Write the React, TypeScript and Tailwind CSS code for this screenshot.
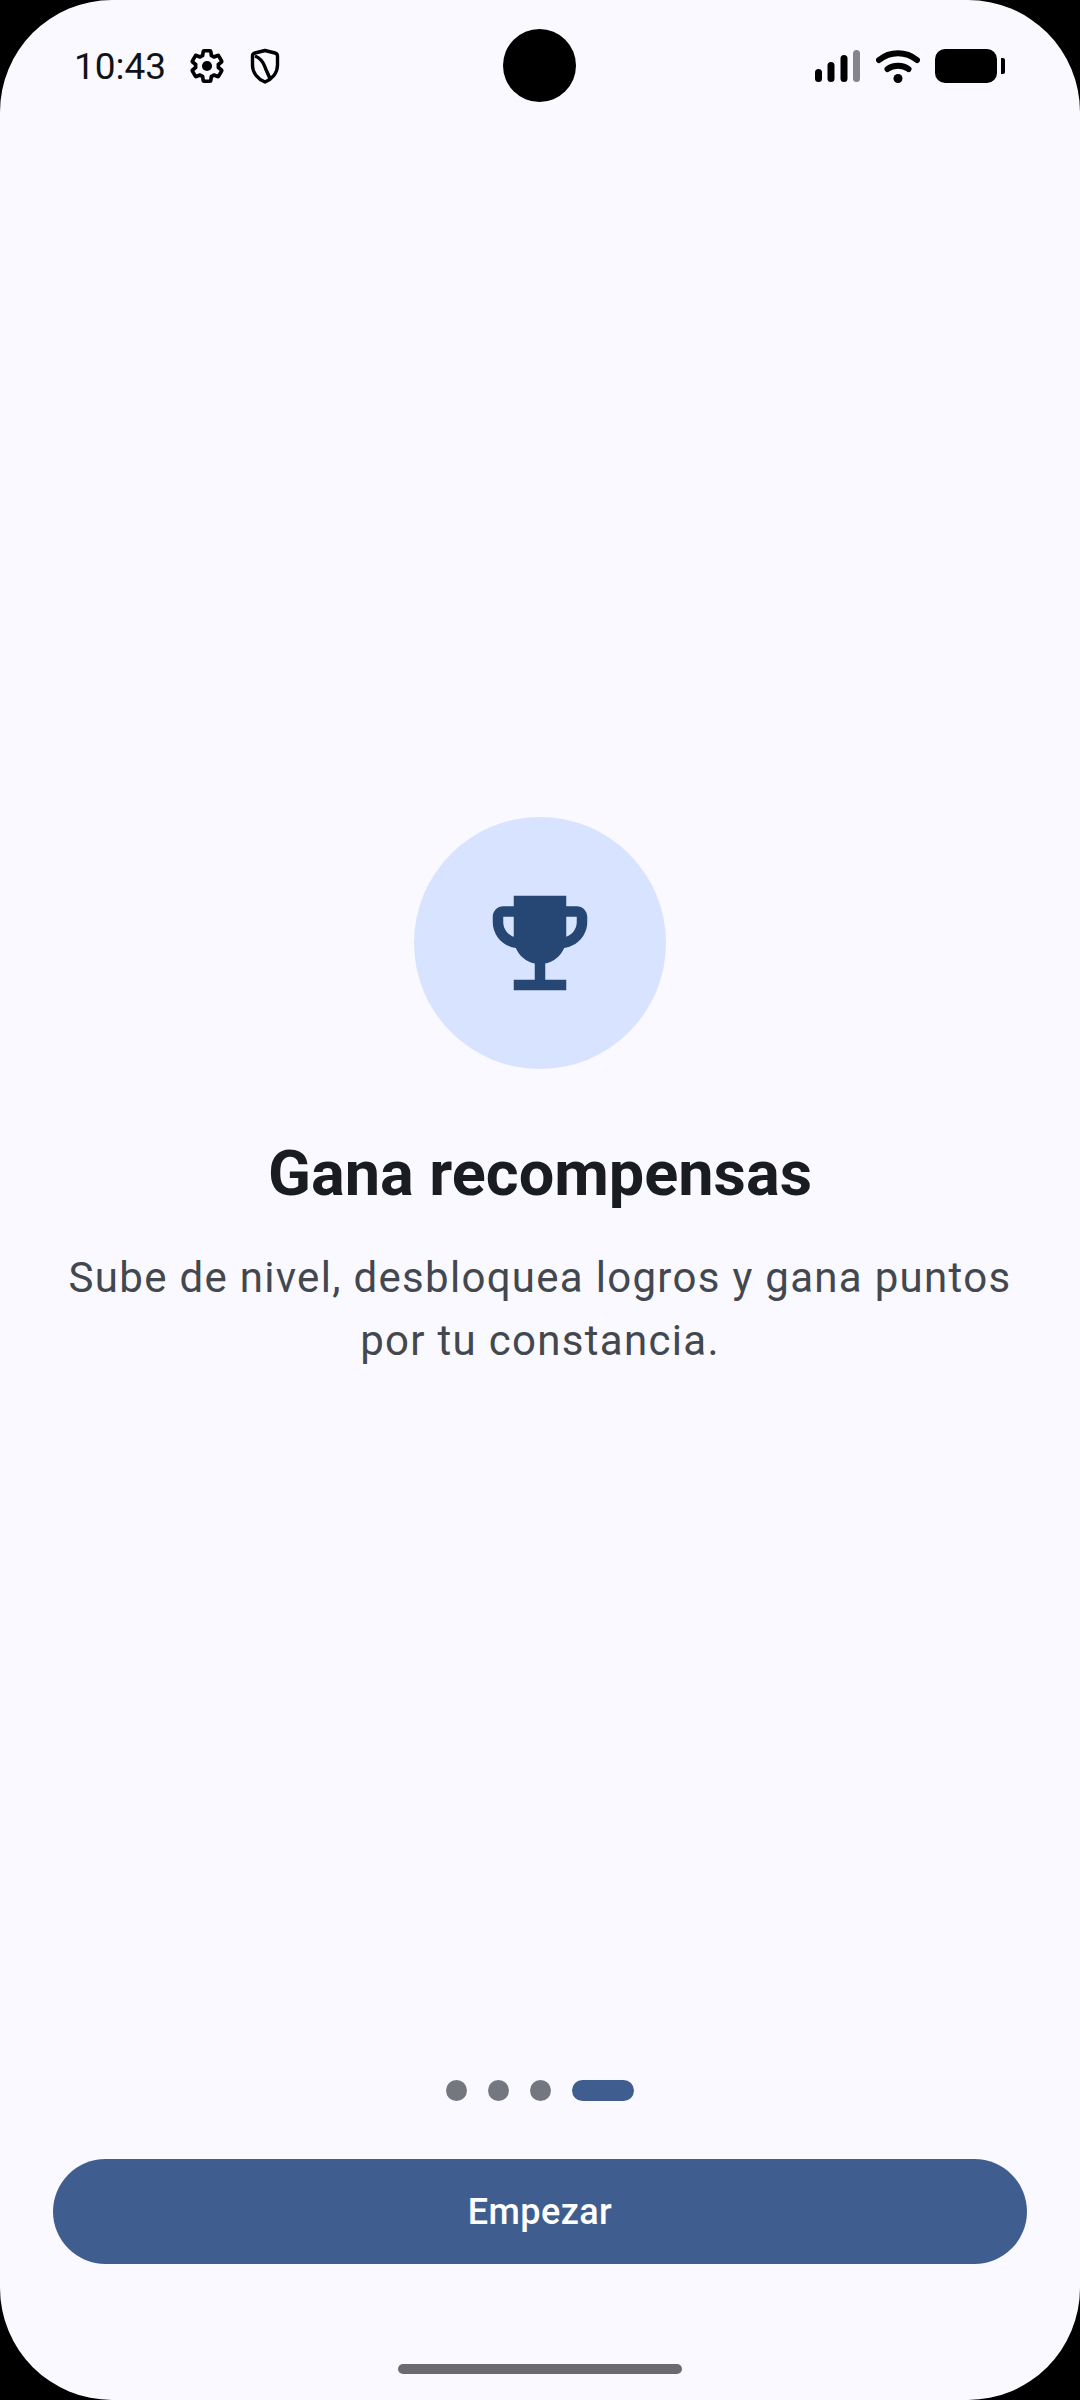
const dots = [0, 1, 2];

function GearIcon() {
  return (
    <svg viewBox="0 0 24 24" className="h-[38px] w-[38px]">
      <path
        fill="none"
        stroke="#000"
        strokeWidth="2.3"
        strokeLinejoin="round"
        d="M19.14 12.94c.04-.3.06-.61.06-.94 0-.32-.02-.64-.07-.94l2.03-1.58c.18-.14.23-.41.12-.61l-1.92-3.32c-.12-.22-.37-.29-.59-.22l-2.39.96c-.5-.38-1.03-.7-1.62-.94l-.36-2.54c-.04-.24-.24-.41-.48-.41h-3.84c-.24 0-.43.17-.47.41l-.36 2.54c-.59.24-1.13.57-1.62.94l-2.39-.96c-.22-.08-.47 0-.59.22L2.74 8.87c-.12.21-.08.47.12.61l2.03 1.58c-.05.3-.09.63-.09.94s.02.64.07.94l-2.03 1.58c-.18.14-.23.41-.12.61l1.92 3.32c.12.22.37.29.59.22l2.39-.96c.5.38 1.03.7 1.62.94l.36 2.54c.05.24.24.41.48.41h3.84c.24 0 .44-.17.47-.41l.36-2.54c.59-.24 1.13-.56 1.62-.94l2.39.96c.22.08.47 0 .59-.22l1.92-3.32c.12-.22.07-.47-.12-.61l-2.01-1.58z"
      />
      <circle cx="12" cy="12" r="3.2" fill="#000" />
    </svg>
  );
}

function ShieldIcon() {
  return (
    <svg viewBox="0 0 30 36" className="h-[36px] w-[30px]" fill="none" stroke="#000" strokeWidth="3.4">
      <path d="M15 2.5 L25 5 Q27.5 5.7 27.5 8 V17 C27.5 25 22 31 15 34 C8 31 2.5 25 2.5 17 V8 Q2.5 5.7 5 5 Z" strokeLinejoin="round" />
      <path d="M5 8 C10 10 13 13 15 19 C16.5 24 19 27 20 31" />
    </svg>
  );
}

function SignalIcon() {
  return (
    <svg viewBox="0 0 45 32" className="h-[32px] w-[45px]">
      <rect x="0" y="19" width="7" height="13" rx="3.5" fill="#000" />
      <rect x="12.5" y="12" width="7" height="20" rx="3.5" fill="#000" />
      <rect x="25.5" y="5" width="7" height="27" rx="3.5" fill="#000" />
      <rect x="38" y="0" width="7" height="32" rx="3.5" fill="#84858c" />
    </svg>
  );
}

function WifiIcon() {
  return (
    <svg viewBox="0 0 44 33" className="h-[33px] w-[44px]" fill="none" stroke="#000" strokeWidth="6" strokeLinecap="round">
      <path d="M3 10 C14 1 30 1 41 10" />
      <path d="M11.5 19 C17 14.5 27 14.5 32.5 19" />
      <circle cx="22" cy="28.5" r="4.5" fill="#000" stroke="none" />
    </svg>
  );
}

function BatteryIcon() {
  return (
    <div className="flex items-center gap-[4px]">
      <div className="h-[34px] w-[62px] rounded-[10px] bg-black" />
      <div className="h-[16px] w-[4px] rounded-r-[2px] bg-black" />
    </div>
  );
}

function TrophyIcon() {
  return (
    <svg viewBox="0 0 24 24" className="h-[126px] w-[126px]" fill="#264673">
      <path d="M19 5h-2V3H7v2H5c-1.1 0-2 .9-2 2v1c0 2.55 1.92 4.63 4.39 4.94.63 1.5 1.98 2.63 3.61 2.96V19H7v2h10v-2h-4v-3.1c1.63-.33 2.98-1.46 3.61-2.96C19.08 12.63 21 10.55 21 8V7c0-1.1-.9-2-2-2zM5 8V7h2v3.82C5.84 10.4 5 9.3 5 8zm14 0c0 1.3-.84 2.4-2 2.82V7h2v1z" />
    </svg>
  );
}

export default function App() {
  return (
    <div className="h-[2400px] w-[1080px] bg-black font-['Roboto',sans-serif]">
      <div className="relative flex h-full flex-col overflow-hidden rounded-[112px] bg-[#faf9ff]">
        {/* camera cutout */}
        <div className="absolute left-[503px] top-[29px] h-[73px] w-[73px] rounded-full bg-black" />

        {/* status bar */}
        <div className="flex h-[132px] shrink-0 items-center justify-between pl-[74px] pr-[75px]">
          <div className="flex items-center">
            <span className="text-[37px] leading-none text-[#111318]">10:43</span>
            <div className="ml-[22px]">
              <GearIcon />
            </div>
            <div className="ml-[24px]">
              <ShieldIcon />
            </div>
          </div>
          <div className="flex items-center gap-[15.5px]">
            <SignalIcon />
            <WifiIcon />
            <BatteryIcon />
          </div>
        </div>

        <div className="flex flex-1 flex-col items-center justify-center px-[53px] pb-[23px]">
          <div className="flex h-[252px] w-[252px] items-center justify-center rounded-full bg-[#d7e3ff]">
            <TrophyIcon />
          </div>
          <h1 className="mt-[63px] text-center text-[63px] font-bold leading-[84px] text-[#191c20]">Gana recompensas</h1>
          <p className="mt-[30px] text-center text-[42px] leading-[63px] tracking-[1.3px] text-[#43474e]">
            Sube de nivel, desbloquea logros y gana puntos
            <br />
            por tu constancia.
          </p>
        </div>

        <div className="flex shrink-0 items-center justify-center gap-[21px]">
          {dots.map((d) => (
            <div key={d} className="h-[21px] w-[21px] rounded-full bg-[#74777f]" />
          ))}
          <div className="h-[21px] w-[62px] rounded-full bg-[#3f5e8f]" />
        </div>

        <div className="mx-[53px] mt-[58px] flex h-[105px] shrink-0 items-center justify-center rounded-full bg-[#3f5e8f]">
          <span className="text-[36px] font-medium tracking-[0.4px] text-white">Empezar</span>
        </div>

        <div className="flex h-[136px] shrink-0 items-end justify-center pb-[26px]">
          <div className="h-[10px] w-[284px] rounded-full bg-[#6b6b6f]" />
        </div>
      </div>
    </div>
  );
}
